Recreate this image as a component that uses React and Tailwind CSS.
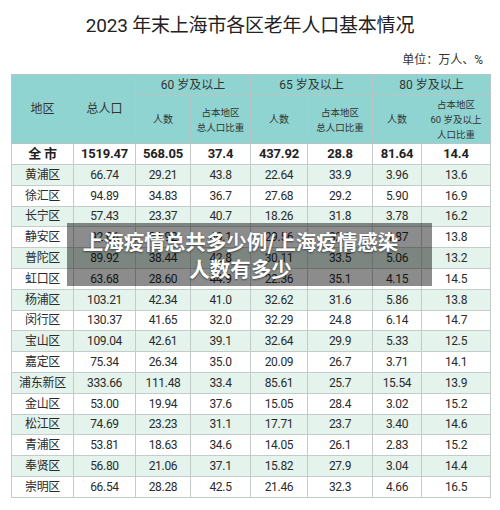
const rows = [
  ['黄浦区', '66.74', '29.21', '43.8', '22.64', '33.9', '3.96', '13.6'],
  ['徐汇区', '94.89', '34.83', '36.7', '27.68', '29.2', '5.90', '16.9'],
  ['长宁区', '57.43', '23.37', '40.7', '18.26', '31.8', '3.78', '16.2'],
  ['静安区', '92.06', '36.92', '40.1', '29.56', '32.1', '4.87', '13.8'],
  ['普陀区', '89.92', '38.44', '42.8', '30.11', '33.5', '5.06', '13.2'],
  ['虹口区', '63.68', '28.60', '44.9', '22.36', '35.1', '4.15', '14.5'],
  ['杨浦区', '103.21', '42.34', '41.0', '32.62', '31.6', '5.86', '13.8'],
  ['闵行区', '130.37', '41.65', '32.0', '32.29', '24.8', '6.14', '14.7'],
  ['宝山区', '109.04', '42.61', '39.1', '32.64', '29.9', '5.33', '12.5'],
  ['嘉定区', '75.34', '26.34', '35.0', '20.09', '26.7', '3.71', '14.1'],
  ['浦东新区', '333.66', '111.48', '33.4', '85.61', '25.7', '15.54', '13.9'],
  ['金山区', '53.00', '19.94', '37.6', '15.05', '28.4', '3.02', '15.2'],
  ['松江区', '74.69', '23.23', '31.1', '17.71', '23.7', '3.40', '14.6'],
  ['青浦区', '53.81', '18.63', '34.6', '14.05', '26.1', '2.83', '15.2'],
  ['奉贤区', '56.80', '21.06', '37.1', '15.82', '27.9', '3.04', '14.4'],
  ['崇明区', '66.54', '28.28', '42.5', '21.46', '32.3', '4.66', '16.5'],
];

const total = ['全 市', '1519.47', '568.05', '37.4', '437.92', '28.8', '81.64', '14.4'];

const widths = ['w-[62px]', 'w-[62px]', 'w-[55px]', 'w-[60px]', 'w-[57px]', 'w-[65px]', 'w-[49px]', 'w-[69px]'];

export default function App() {
  return (
    <div className="relative w-[500px] h-[510px] overflow-hidden bg-white text-[#2b2b2b] font-['Roboto','Noto_Sans_CJK_SC',sans-serif]">
      {/* Title */}
      <div className="h-[52px] flex items-center justify-center">
        <h1 className="text-[19px] text-[#222] tracking-[-0.2px]">2023 年末上海市各区老年人口基本情况</h1>
      </div>
      <div className="h-[16px] leading-[16px] text-right pr-[17px] text-[12px] text-[#333]">单位：万人、%</div>

      {/* Table */}
      <table className="mt-[6px] ml-[11px] w-[479px] table-fixed border-collapse text-center">
        <colgroup>
          {widths.map((w, i) => (
            <col key={i} className={w} />
          ))}
        </colgroup>
        <thead className="bg-[#8fd4d1] text-[#333]">
          <tr className="h-[21px]">
            <th rowSpan={2} className="border border-[#b4c6c5] font-normal text-[12px]">地区</th>
            <th rowSpan={2} className="border border-[#b4c6c5] font-normal text-[12px]">总人口</th>
            <th colSpan={2} className="border border-[#b4c6c5] font-normal text-[12px]">60 岁及以上</th>
            <th colSpan={2} className="border border-[#b4c6c5] font-normal text-[12px]">65 岁及以上</th>
            <th colSpan={2} className="border border-[#b4c6c5] font-normal text-[12px]">80 岁及以上</th>
          </tr>
          <tr className="h-[48px]">
            <th className="border border-[#b4c6c5] font-normal text-[10px]">人数</th>
            <th className="border border-[#b4c6c5] font-normal text-[9.5px] leading-[15px]">占本地区<br />总人口比重</th>
            <th className="border border-[#b4c6c5] font-normal text-[10px]">人数</th>
            <th className="border border-[#b4c6c5] font-normal text-[9.5px] leading-[15px]">占本地区<br />总人口比重</th>
            <th className="border border-[#b4c6c5] font-normal text-[10px]">人数</th>
            <th className="border border-[#b4c6c5] font-normal text-[9.5px] leading-[15px]">占本地区<br />60 岁及以上<br />人口比重</th>
          </tr>
        </thead>
        <tbody>
          <tr className="h-[21px] bg-white font-bold text-[13px] text-[#222]">
            {total.map((v, i) => (
              <td key={i} className="border border-[#c3cccb] tracking-[-0.2px]">{v}</td>
            ))}
          </tr>
          {rows.map((r, idx) => (
            <tr key={r[0]} className={`h-[20.8px] text-[12px] ${idx % 2 === 0 ? 'bg-[#e4f3ec]' : 'bg-white'}`}>
              {r.map((v, i) => (
                <td key={i} className="border border-[#c3cccb] tracking-[-0.3px]">{v}</td>
              ))}
            </tr>
          ))}
        </tbody>
      </table>

      {/* Caption overlay */}
      <div className="absolute left-[67px] top-[223px] w-[365px] h-[63px] bg-black/45 flex flex-col items-center justify-center pr-[18px]">
        <p className="text-white font-bold text-[20.5px] leading-[27px] font-['Noto_Sans_CJK_SC',sans-serif] [text-shadow:0_1px_2px_rgba(0,0,0,0.5)] whitespace-nowrap">上海疫情总共多少例/上海疫情感染</p>
        <p className="text-white font-bold text-[20.5px] leading-[27px] font-['Noto_Sans_CJK_SC',sans-serif] [text-shadow:0_1px_2px_rgba(0,0,0,0.5)]">人数有多少</p>
      </div>
    </div>
  );
}
